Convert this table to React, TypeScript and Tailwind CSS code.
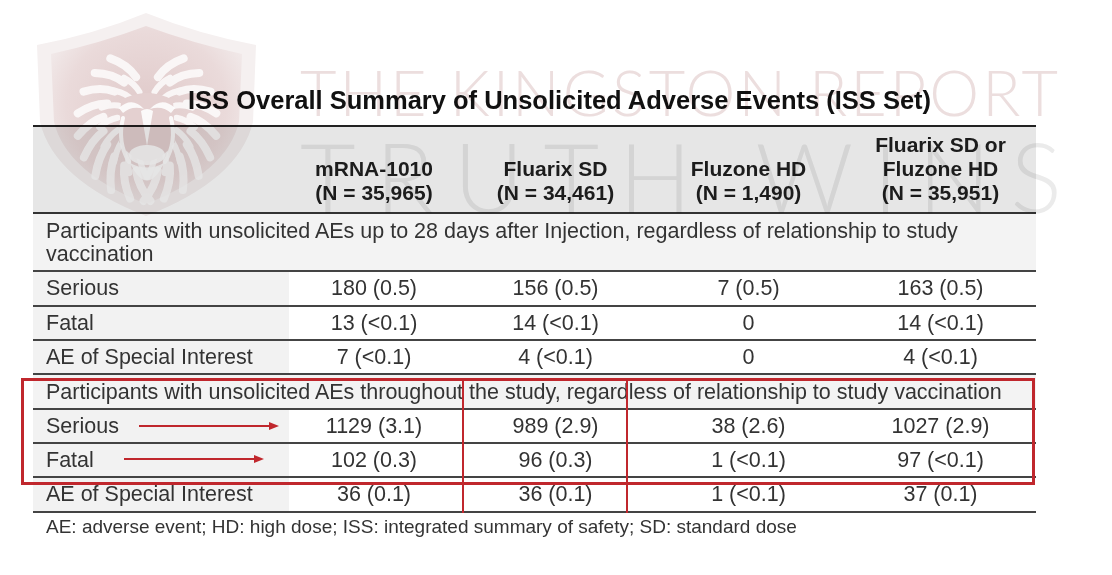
import React from 'react';

type Row = { cells: string[]; h: string };

const firstBlock: Row[] = [
  { cells: ['Serious', '180 (0.5)', '156 (0.5)', '7 (0.5)', '163 (0.5)'], h: 'h-[35px]' },
  { cells: ['Fatal', '13 (<0.1)', '14 (<0.1)', '0', '14 (<0.1)'], h: 'h-[34px]' },
  { cells: ['AE of Special Interest', '7 (<0.1)', '4 (<0.1)', '0', '4 (<0.1)'], h: 'h-[34px]' },
];

const secondBlock: Row[] = [
  { cells: ['Serious', '1129 (3.1)', '989 (2.9)', '38 (2.6)', '1027 (2.9)'], h: 'h-[34px]' },
  { cells: ['Fatal', '102 (0.3)', '96 (0.3)', '1 (<0.1)', '97 (<0.1)'], h: 'h-[34px]' },
  { cells: ['AE of Special Interest', '36 (0.1)', '36 (0.1)', '1 (<0.1)', '37 (0.1)'], h: 'h-[35px]' },
];

const cols = 'grid grid-cols-[256px_170px_193px_193px_191px]';

function DataRow({ row }: { row: Row }) {
  return (
    <div className={`${cols} ${row.h} border-b-2 border-[#444]`}>
      <div className="flex items-center bg-[#f2f2f2] pl-[13px]">{row.cells[0]}</div>
      {row.cells.slice(1).map((c, i) => (
        <div key={i} className="flex items-center justify-center">
          {c}
        </div>
      ))}
    </div>
  );
}

function SectionRow({ text, h }: { text: string; h: string }) {
  return (
    <div className={`${h} flex items-center border-b-2 border-[#444] bg-[#f3f3f3] px-[13px] pt-[2px] leading-[23px]`}>
      {text}
    </div>
  );
}

// mane strands, mirrored left/right and flowing downwards
function maneStrands(cx: number, cy: number, n: number, r1: number, r2: number, sweep: number) {
  const out: string[] = [];
  [-1, 1].forEach((s) => {
    for (let k = 0; k < n; k++) {
      const t = (0.08 + (k / (n - 1)) * 0.84) * Math.PI;
      const rm = (r1 + r2) / 2;
      const x1 = cx + s * Math.sin(t) * r1;
      const y1 = cy - Math.cos(t) * r1 * 1.1;
      const mx = cx + s * Math.sin(t + sweep * 0.35) * rm;
      const my = cy - Math.cos(t + sweep * 0.35) * rm * 1.12;
      const x2 = cx + s * Math.sin(t + sweep) * r2;
      const y2 = cy - Math.cos(t + sweep) * r2 * 1.1;
      out.push(
        `M${x1.toFixed(1)},${y1.toFixed(1)} Q${mx.toFixed(1)},${my.toFixed(1)} ${x2.toFixed(1)},${y2.toFixed(1)}`,
      );
    }
  });
  return out;
}

function Shield() {
  const cx = 112;
  const cy = 112;
  const outer = maneStrands(cx, cy, 10, 44, 70, 0.3);
  const inner = maneStrands(cx, cy, 8, 30, 48, 0.25);

  return (
    <svg
      className="pointer-events-none absolute left-[35px] top-[12px] mix-blend-multiply"
      width="223"
      height="205"
      viewBox="0 0 223 205"
    >
      <defs>
        <radialGradient id="sh" cx="50%" cy="45%" r="60%">
          <stop offset="0%" stopColor="#e0caca" />
          <stop offset="70%" stopColor="#eadada" />
          <stop offset="100%" stopColor="#f2ebeb" />
        </radialGradient>
      </defs>
      <path
        d="M2,33 Q60,22 111,1 Q163,22 221,33 L218,110 Q204,168 111,204 Q19,168 5,110 Z"
        fill="#f5f0f0"
      />
      <path
        d="M16,42 Q66,31 111,14 Q157,31 207,42 L204,110 Q192,160 111,192 Q31,160 19,110 Z"
        fill="url(#sh)"
      />
      <g stroke="#ffffff" strokeLinecap="round" fill="none" opacity="0.8">
        <g strokeWidth="8">
          {outer.map((d, i) => (
            <path key={i} d={d} />
          ))}
        </g>
        <g strokeWidth="6">
          {inner.map((d, i) => (
            <path key={i} d={d} />
          ))}
        </g>
      </g>
      <path d="M86,88 Q112,74 138,88 L140,130 Q112,168 84,130 Z" fill="#e4d0d0" />
      <g fill="#ffffff" opacity="0.88">
        <path d="M84,96 Q97,84 109,97 Q97,93 88,101 Z" />
        <path d="M140,96 Q127,84 115,97 Q127,93 136,101 Z" />
        <path d="M106,99 L112,134 L118,99 Q112,95 106,99 Z" />
        <ellipse cx="112" cy="143" rx="18" ry="10" />
        <path d="M95,151 Q112,186 129,151 Q112,160 95,151 Z" />
      </g>
      <g stroke="#ffffff" strokeWidth="4" strokeLinecap="round" fill="none" opacity="0.88">
        <path d="M88,106 Q82,130 94,150" />
        <path d="M136,106 Q142,130 130,150" />
      </g>
    </svg>
  );
}

function Arrow({ left, top, width }: { left: string; top: string; width: number }) {
  return (
    <svg className={`pointer-events-none absolute ${left} ${top}`} width={width} height="12" viewBox={`0 0 ${width} 12`}>
      <line x1="1" y1="6" x2={width - 8} y2="6" stroke="#c0272d" strokeWidth="2" />
      <polygon points={`${width - 10},2 ${width},6 ${width - 10},10`} fill="#c0272d" />
    </svg>
  );
}

export default function App() {
  return (
    <div
      className="relative h-[575px] w-[1112px] overflow-hidden bg-white text-[21.5px] text-[#333]"
      style={{ fontFamily: '"Liberation Sans", Arial, sans-serif' }}
    >
      <div className="pl-[188px] pt-[86px] text-[25.5px] font-bold leading-[28px] text-[#111]">
        ISS Overall Summary of Unsolicited Adverse Events (ISS Set)
      </div>

      <div className="ml-[33px] mt-[11px] w-[1003px] border-t-2 border-[#222]">
        <div className={`${cols} h-[87px] border-b-2 border-[#333] bg-[#e6e6e6] text-[21px] font-bold leading-[24px] text-[#1c1c1c]`}>
          <div />
          <div className="flex items-end justify-center pb-[7px] text-center">
            mRNA-1010
            <br />
            (N = 35,965)
          </div>
          <div className="flex items-end justify-center pb-[7px] text-center">
            Fluarix SD
            <br />
            (N = 34,461)
          </div>
          <div className="flex items-end justify-center pb-[7px] text-center">
            Fluzone HD
            <br />
            (N = 1,490)
          </div>
          <div className="flex items-end justify-center pb-[7px] text-center">
            Fluarix SD or
            <br />
            Fluzone HD
            <br />
            (N = 35,951)
          </div>
        </div>

        <SectionRow
          h="h-[58px]"
          text="Participants with unsolicited AEs up to 28 days after Injection, regardless of relationship to study vaccination"
        />
        {firstBlock.map((r, i) => (
          <DataRow key={i} row={r} />
        ))}

        <SectionRow
          h="h-[35px]"
          text="Participants with unsolicited AEs throughout the study, regardless of relationship to study vaccination"
        />
        {secondBlock.map((r, i) => (
          <DataRow key={i} row={r} />
        ))}
      </div>

      <div className="mt-[3px] pl-[46px] text-[19px] leading-[22px] text-[#333]">
        AE: adverse event; HD: high dose; ISS: integrated summary of safety; SD: standard dose
      </div>

      {/* watermark */}
      <Shield />
      <div
        className="pointer-events-none absolute left-[300px] top-[60px] whitespace-nowrap text-[63px] font-light leading-none tracking-[3px] text-[#ecdede] mix-blend-multiply"
        style={{ fontFamily: 'Lato, "Liberation Sans", sans-serif' }}
      >
        THE KINGSTON REPORT
      </div>
      <div
        className="pointer-events-none absolute left-[300px] top-[128px] whitespace-nowrap text-[96px] font-light leading-none tracking-[20px] text-[#ebebeb] mix-blend-multiply"
        style={{ fontFamily: 'Lato, "Liberation Sans", sans-serif' }}
      >
        TRUTH WINS
      </div>

      {/* annotations */}
      <div className="pointer-events-none absolute left-[21px] top-[378px] h-[107px] w-[1014px] border-[3px] border-[#c0272d]" />
      <div className="pointer-events-none absolute left-[462px] top-[378px] h-[135px] w-[2px] bg-[#c0272d]" />
      <div className="pointer-events-none absolute left-[626px] top-[378px] h-[135px] w-[2px] bg-[#c0272d]" />
      <Arrow left="left-[138px]" top="top-[420px]" width={141} />
      <Arrow left="left-[123px]" top="top-[453px]" width={141} />
    </div>
  );
}
